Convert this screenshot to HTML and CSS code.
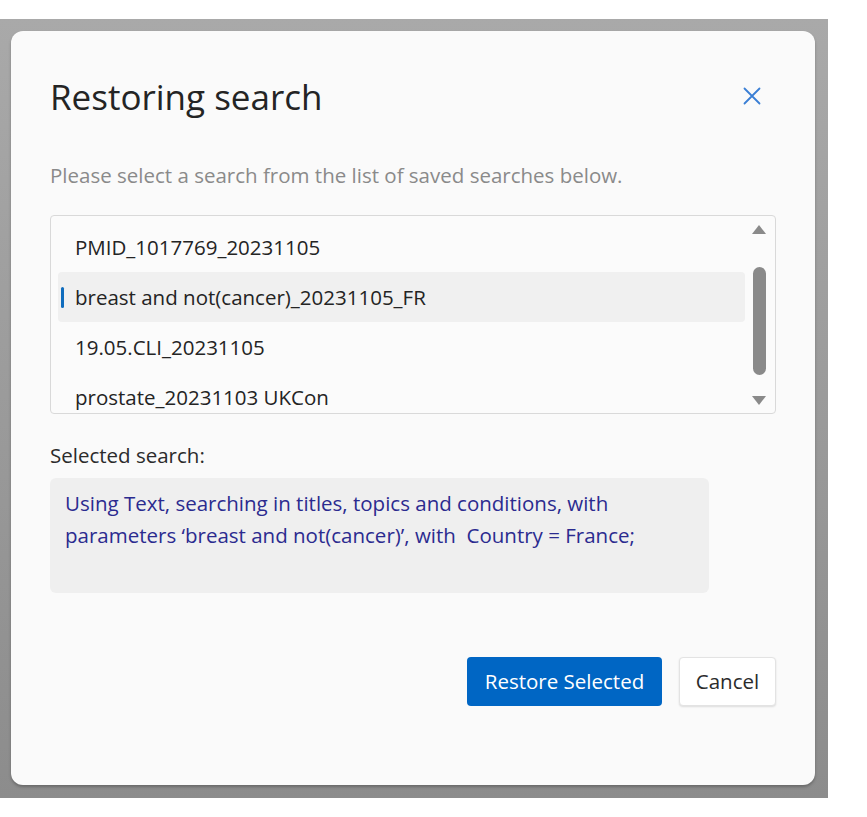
FILE: index.html
```html
<!DOCTYPE html>
<html>
<head>
<meta charset="utf-8">
<link rel="stylesheet" href="styles.css">
</head>
<body>
<div class="overlay">
  <div class="dialog">
    <div class="header">
      <h1 class="title">Restoring search</h1>
      <button class="close" aria-label="Close">
        <svg width="18" height="18" viewBox="0 0 18 18"><path d="M1.5 1.5 L16.5 16.5 M16.5 1.5 L1.5 16.5" stroke="#3a7fd5" stroke-width="1.8" fill="none" stroke-linecap="round"/></svg>
      </button>
    </div>
    <p class="subtitle">Please select a search from the list of saved searches below.</p>
    <div class="listbox">
      <ul class="items">
        <li class="item">PMID_1017769_20231105</li>
        <li class="item selected"><span class="marker"></span>breast and not(cancer)_20231105_FR</li>
        <li class="item">19.05.CLI_20231105</li>
        <li class="item">prostate_20231103 UKCon</li>
      </ul>
      <div class="scrollbar">
        <span class="arrow up"></span>
        <span class="track"><span class="thumb"></span></span>
        <span class="arrow down"></span>
      </div>
    </div>
    <div class="label">Selected search:</div>
    <div class="summary">Using Text, searching in titles, topics and conditions, with parameters ‘breast and not(cancer)’, with&nbsp; Country = France;</div>
    <div class="actions">
      <button class="btn primary">Restore Selected</button>
      <button class="btn secondary">Cancel</button>
    </div>
  </div>
</div>
</body>
</html>
```

FILE: styles.css
```css
* { box-sizing: border-box; }
html, body { margin: 0; padding: 0; background: #ffffff; }
body { font-family: "Open Sans", "Noto Sans", sans-serif; }

.overlay {
  margin-top: 19px;
  width: 828px;
  height: 779px;
  background: linear-gradient(180deg, #a9a9a9 0%, #8c8c8c 100%);
  padding: 12px 13px 13px 11px;
}

.dialog {
  width: 804px;
  height: 754px;
  background: #fafafa;
  border-radius: 12px;
  box-shadow: 0 2px 3px rgba(0,0,0,0.25);
  padding: 0 39px;
  display: flex;
  flex-direction: column;
}

.header {
  display: flex;
  justify-content: space-between;
  align-items: center;
  height: 131px;
  padding-top: 0;
}
.title {
  margin: 0;
  font-weight: 400;
  font-size: 35px;
  color: #242424;
}
.close {
  border: none;
  background: transparent;
  padding: 0;
  margin-right: 15px;
  margin-bottom: 2px;
  width: 18px;
  height: 18px;
  display: flex;
}

.subtitle {
  margin: 0;
  font-size: 20.5px;
  color: #8a8a8a;
  line-height: 26px;
}

.listbox {
  margin-top: 27px;
  width: 726px;
  height: 199px;
  border: 1px solid #d9d9d9;
  border-radius: 4px;
  background: #fbfbfb;
  display: flex;
  padding: 6px 0 0 7px;
  overflow: hidden;
}
.items {
  list-style: none;
  margin: 0;
  padding: 0;
  width: 687px;
}
.item {
  height: 50px;
  display: flex;
  align-items: center;
  padding-left: 17px;
  font-size: 20.5px;
  color: #242424;
  border-radius: 4px;
  position: relative;
}
.item.selected { background: #f0f0f0; }
.marker {
  position: absolute;
  left: 3px;
  top: 15px;
  width: 3px;
  height: 21px;
  background: #0f6cbd;
  border-radius: 2px;
}
.scrollbar {
  margin-left: 4px;
  width: 20px;
  display: flex;
  flex-direction: column;
  align-items: center;
  padding-top: 3px;
}
.arrow {
  width: 0; height: 0;
  border-left: 7px solid transparent;
  border-right: 7px solid transparent;
}
.arrow.up { border-bottom: 9px solid #8a8a8a; }
.arrow.down { border-top: 9px solid #8a8a8a; }
.track {
  height: 162px;
  display: flex;
  align-items: flex-start;
  padding-top: 33px;
}
.thumb {
  width: 13px;
  height: 108px;
  background: #8a8a8a;
  border-radius: 7px;
}

.label {
  margin-top: 28px;
  font-size: 20.5px;
  color: #2b2b2b;
  line-height: 26px;
}
.summary {
  margin-top: 10px;
  width: 659px;
  height: 115px;
  background: #efefef;
  border-radius: 6px;
  padding: 9px 15px;
  color: #2b2b8f;
  font-size: 20.5px;
  line-height: 32px;
}

.actions {
  margin-top: 64px;
  display: flex;
  justify-content: flex-end;
  gap: 17px;
  width: 726px;
}
.btn {
  font-family: inherit;
  font-size: 20.5px;
  height: 49px;
  border-radius: 4px;
  cursor: pointer;
  padding: 0 0 2px;
}
.primary {
  width: 195px;
  background: #0066c4;
  color: #ffffff;
  border: none;
}
.secondary {
  width: 97px;
  background: #ffffff;
  color: #2b2b2b;
  border: 1px solid #e3e3e3;
  box-shadow: 0 1px 2px rgba(0,0,0,0.12);
}
```
